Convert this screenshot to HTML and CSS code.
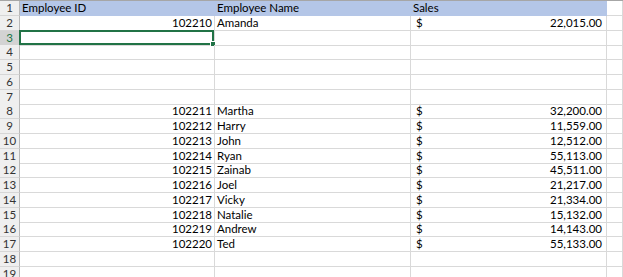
FILE: index.html
```html
<!DOCTYPE html>
<html>
<head>
<meta charset="utf-8">
<link rel="stylesheet" href="styles.css">
</head>
<body>
<div class="sheet">
  <div class="row"><div class="rh">1</div><div class="c h">Employee ID</div><div class="c h">Employee Name</div><div class="c h">Sales</div><div class="c"></div></div>
  <div class="row"><div class="rh">2</div><div class="c num">102210</div><div class="c">Amanda</div><div class="c money"><span>$</span><span>22,015.00</span></div><div class="c"></div></div>
  <div class="row"><div class="rh sel">3</div><div class="c active"><span class="cursor"><span class="handle"></span></span></div><div class="c"></div><div class="c"></div><div class="c"></div></div>
  <div class="row"><div class="rh">4</div><div class="c"></div><div class="c"></div><div class="c"></div><div class="c"></div></div>
  <div class="row"><div class="rh">5</div><div class="c"></div><div class="c"></div><div class="c"></div><div class="c"></div></div>
  <div class="row"><div class="rh">6</div><div class="c"></div><div class="c"></div><div class="c"></div><div class="c"></div></div>
  <div class="row"><div class="rh">7</div><div class="c"></div><div class="c"></div><div class="c"></div><div class="c"></div></div>
  <div class="row"><div class="rh">8</div><div class="c num">102211</div><div class="c">Martha</div><div class="c money"><span>$</span><span>32,200.00</span></div><div class="c"></div></div>
  <div class="row"><div class="rh">9</div><div class="c num">102212</div><div class="c">Harry</div><div class="c money"><span>$</span><span>11,559.00</span></div><div class="c"></div></div>
  <div class="row"><div class="rh">10</div><div class="c num">102213</div><div class="c">John</div><div class="c money"><span>$</span><span>12,512.00</span></div><div class="c"></div></div>
  <div class="row"><div class="rh">11</div><div class="c num">102214</div><div class="c">Ryan</div><div class="c money"><span>$</span><span>55,113.00</span></div><div class="c"></div></div>
  <div class="row"><div class="rh">12</div><div class="c num">102215</div><div class="c">Zainab</div><div class="c money"><span>$</span><span>45,511.00</span></div><div class="c"></div></div>
  <div class="row"><div class="rh">13</div><div class="c num">102216</div><div class="c">Joel</div><div class="c money"><span>$</span><span>21,217.00</span></div><div class="c"></div></div>
  <div class="row"><div class="rh">14</div><div class="c num">102217</div><div class="c">Vicky</div><div class="c money"><span>$</span><span>21,334.00</span></div><div class="c"></div></div>
  <div class="row"><div class="rh">15</div><div class="c num">102218</div><div class="c">Natalie</div><div class="c money"><span>$</span><span>15,132.00</span></div><div class="c"></div></div>
  <div class="row"><div class="rh">16</div><div class="c num">102219</div><div class="c">Andrew</div><div class="c money"><span>$</span><span>14,143.00</span></div><div class="c"></div></div>
  <div class="row"><div class="rh">17</div><div class="c num">102220</div><div class="c">Ted</div><div class="c money"><span>$</span><span>55,133.00</span></div><div class="c"></div></div>
  <div class="row"><div class="rh">18</div><div class="c"></div><div class="c"></div><div class="c"></div><div class="c"></div></div>
  <div class="row"><div class="rh">19</div><div class="c"></div><div class="c"></div><div class="c"></div><div class="c"></div></div>
</div>
</body>
</html>
```
FILE: styles.css
```css
* { box-sizing: border-box; }
html, body { margin: 0; padding: 0; background: #fff; }
body {
  width: 623px;
  height: 277px;
  overflow: hidden;
  font-family: Lato, "Liberation Sans", sans-serif;
  font-size: 11.5px;
  color: #000;
}
.sheet {
  border-top: 1px solid #a6a6a6;
}
.row {
  display: grid;
  grid-template-columns: 20px 195px 196px 196px 1fr;
  height: 14.75px;
}
.rh {
  background: #efefef;
  border-right: 1px solid #b8b8b8;
  border-bottom: 1px solid #d6d6d6;
  color: #333;
  text-align: center;
  line-height: 14px;
  font-size: 11.5px;
}
.rh.sel {
  background: #d3d3d3;
  color: #217346;
}
.c {
  position: relative;
  border-right: 1px solid #d9d9d9;
  border-bottom: 1px solid #d9d9d9;
  padding: 0 2px;
  line-height: 14px;
  white-space: nowrap;
}
.h {
  background: #b4c6e7;
  border-right-color: #b4c6e7;
  border-bottom-color: #b4c6e7;
}
.num { text-align: right; }
.money {
  display: flex;
  justify-content: space-between;
  padding: 0 4px 0 5px;
}
.cursor {
  position: absolute;
  left: -1px;
  top: -1px;
  right: 0;
  bottom: 0;
  border: 2px solid #217346;
}
.handle {
  position: absolute;
  right: -4px;
  bottom: -4px;
  width: 6px;
  height: 6px;
  background: #217346;
  border: 1px solid #fff;
}
```
